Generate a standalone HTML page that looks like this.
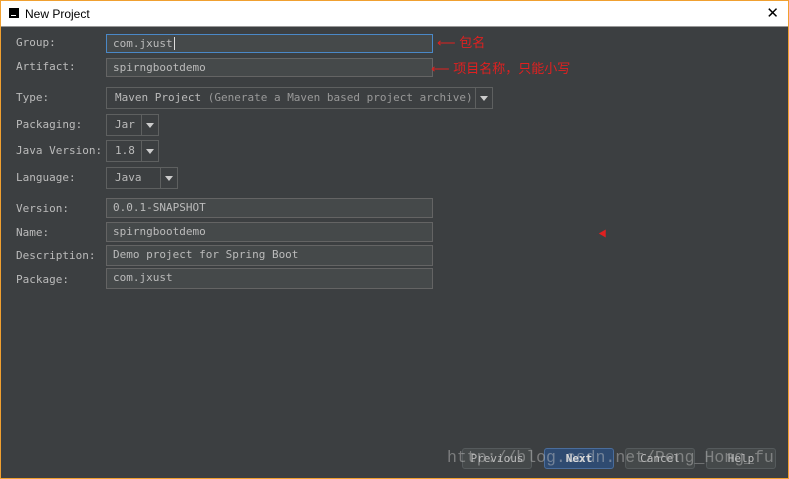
<!DOCTYPE html><html><head><meta charset="utf-8"><style>
body{margin:0;width:789px;height:479px;overflow:hidden;background:#3c3f41;font-family:"DejaVu Sans Mono","Liberation Mono",monospace;}
.win{position:absolute;left:0;top:0;width:787px;height:477px;border:1px solid #f0a030;background:#3c3f41;}
.title{position:absolute;left:0;top:0;width:787px;height:25px;background:#fff;border-bottom:1px solid #999;font-family:"Liberation Sans",sans-serif;font-size:12px;color:#000;}
.lbl{position:absolute;left:15px;font-size:11px;color:#bbb;}
.f{position:absolute;left:105px;width:327px;height:19px;background:#45494a;border:1px solid #646464;box-sizing:border-box;font-size:11px;color:#bbb;padding-left:6px;line-height:17px;}
.dd{position:absolute;left:105px;height:22px;border:1px solid #5e6060;box-sizing:border-box;font-size:11px;color:#bbb;line-height:20px;padding-left:8px;background:#3c3f41;}
.dd .a{position:absolute;right:0;top:0;width:16px;height:20px;border-left:1px solid #5e6060;}
.dd .a:after{content:"";position:absolute;left:4px;top:8px;border-left:4px solid transparent;border-right:4px solid transparent;border-top:5px solid #ccc;}
.cn{position:absolute;color:#e02020;font-family:"Liberation Sans","Noto Sans CJK SC",sans-serif;font-size:13px;}
.btn{position:absolute;top:447px;width:70px;height:21px;border:1px solid #555a5c;border-radius:3px;box-sizing:border-box;background:#45494a;font-size:11px;color:#bbb;text-align:center;line-height:19px;}
</style></head><body><div class="win">
<div class="title"><div style="position:absolute;left:8px;top:7px;width:10px;height:10px;background:#000"><div style="position:absolute;left:2px;top:7px;width:5px;height:1px;background:#fff"></div></div><span style="position:absolute;left:24px;top:6px">New Project</span><span style="position:absolute;right:9px;top:3px;font-size:15px;font-weight:100">✕</span></div>
<div class="lbl" style="top:35px">Group:</div>
<div class="f" style="top:33px;border-color:#4a88c7;height:19px">com.jxust<span style="border-left:1px solid #ddd;margin-left:1px"></span></div>
<div class="cn" style="left:436px;top:31px">⟵ 包名</div>
<div class="lbl" style="top:59px">Artifact:</div>
<div class="f" style="top:57px">spirngbootdemo</div>
<div class="cn" style="left:430px;top:57px">⟵ 项目名称，只能小写</div>
<div class="lbl" style="top:90px">Type:</div>
<div class="dd" style="top:86px;width:387px;">Maven Project <span style="color:#999">(Generate a Maven based project archive)</span><div class="a"></div></div>
<div class="lbl" style="top:117px">Packaging:</div>
<div class="dd" style="top:113px;width:53px">Jar<div class="a"></div></div>
<div class="lbl" style="top:143px">Java Version:</div>
<div class="dd" style="top:139px;width:53px">1.8<div class="a"></div></div>
<div class="lbl" style="top:170px">Language:</div>
<div class="dd" style="top:166px;width:72px">Java<div class="a"></div></div>
<div class="lbl" style="top:201px">Version:</div><div class="f" style="top:197px;height:20px">0.0.1-SNAPSHOT</div>
<div class="lbl" style="top:225px">Name:</div><div class="f" style="top:221px;height:20px">spirngbootdemo</div>
<div class="lbl" style="top:248px">Description:</div><div class="f" style="top:244px;height:21px">Demo project for Spring Boot</div>
<div class="lbl" style="top:272px">Package:</div><div class="f" style="top:267px;height:21px">com.jxust</div>
<div style="position:absolute;left:599px;top:228px;border-left:4px solid transparent;border-right:4px solid transparent;border-bottom:7px solid #e02020;transform:rotate(30deg)"></div>
<div class="btn" style="left:461px">Previous</div>
<div class="btn" style="left:543px;background:#2f4b71;border-color:#4a6d9c;color:#ddd;font-weight:bold">Next</div>
<div class="btn" style="left:624px">Cancel</div>
<div class="btn" style="left:705px">Help</div>
<div style="position:absolute;left:446px;top:447px;font-family:'Liberation Mono',monospace;font-size:16.5px;color:rgba(200,200,200,0.45)">http://blog.csdn.net/Peng_Hong_fu</div>
</div></body></html>
